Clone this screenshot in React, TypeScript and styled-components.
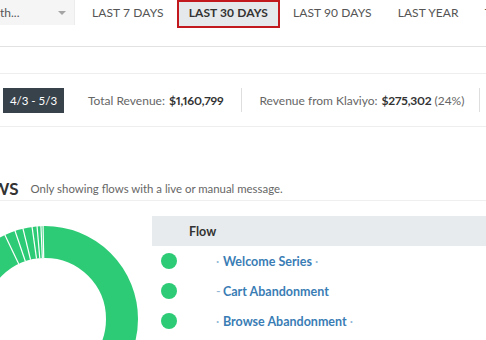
import styled, { createGlobalStyle } from 'styled-components';

const GlobalStyle = createGlobalStyle`
    body {
        margin: 0;
        background: #fff;
        font-family: Lato, "Open Sans", "Liberation Sans", sans-serif;
        color: #555;
    }
`;

const Page = styled.div`
    width: 486px;
    height: 340px;
    overflow: hidden;
`;

const TopBar = styled.div`
    display: flex;
    align-items: flex-start;
    height: 46px;
    border-bottom: 1px solid #e2e2e2;
    white-space: nowrap;
`;

const RangeSelect = styled.div`
    display: flex;
    align-items: center;
    justify-content: space-between;
    flex: none;
    width: 75px;
    height: 25px;
    box-sizing: border-box;
    padding: 0 8px 0 0;
    background: #f5f5f5;
    border-right: 1px solid #ececec;
    font-size: 12px;
    color: #555;
    margin-right: 4px;
`;

const Caret = styled.span`
    width: 0;
    height: 0;
    border-left: 4px solid transparent;
    border-right: 4px solid transparent;
    border-top: 4px solid #a5a5a5;
`;

const Tab = styled.div<{ $active?: boolean }>`
    flex: none;
    height: 28px;
    box-sizing: border-box;
    padding: 0 ${p => (p.$active ? '10px' : '11px')};
    display: flex;
    align-items: center;
    padding-bottom: 4px;
    font-size: 12px;
    letter-spacing: 0.1px;
    border: 2px solid ${p => (p.$active ? '#c2191f' : 'transparent')};
    background: ${p => (p.$active ? '#e6e9eb' : 'transparent')};
    color: ${p => (p.$active ? '#333' : '#555')};
    font-weight: ${p => (p.$active ? 700 : 400)};
`;

const StatsCard = styled.div`
    margin-top: 26px;
    height: 52px;
    border-top: 1px solid #eeeeee;
    border-bottom: 1px solid #eeeeee;
    display: flex;
    align-items: center;
    white-space: nowrap;
`;

const DateBadge = styled.div`
    flex: none;
    margin-left: 3px;
    margin-right: 24px;
    width: 61px;
    height: 25px;
    line-height: 25px;
    text-align: center;
    background: #38424b;
    color: #fff;
    font-size: 11.5px;
`;

const Stat = styled.div<{ $divider?: boolean }>`
    flex: none;
    display: flex;
    align-items: center;
    height: 24px;
    padding: 0 15px 0 ${p => (p.$divider ? '17px' : '0')};
    border-left: ${p => (p.$divider ? '1px solid #dedede' : 'none')};
    font-size: 12px;
    color: #666;
`;

const StatValue = styled.b`
    color: #333;
    margin-left: 4px;
    margin-right: 3px;
    font-variant-numeric: proportional-nums;
    letter-spacing: -0.2px;
`;

const SectionHead = styled.div`
    margin-top: 50px;
    height: 23px;
    display: flex;
    align-items: center;
    border-bottom: 1px solid #efefef;
    white-space: nowrap;
`;

const SectionTitle = styled.div`
    flex: none;
    font-size: 17px;
    font-weight: 700;
    color: #333;
    margin-left: -40px;
    margin-right: 12px;
`;

const SectionNote = styled.div`
    font-size: 11.4px;
    color: #666;
`;

const FlowArea = styled.div`
    display: flex;
`;

const DonutCol = styled.div`
    flex: none;
    width: 152px;
    height: 139px;
`;

const Table = styled.div`
    flex: 1;
    margin-top: 15px;
`;

const HeadRow = styled.div`
    height: 30px;
    display: flex;
    align-items: center;
    padding-left: 37px;
    background: #e8ebed;
    font-size: 12.5px;
    font-weight: 700;
    color: #333;
`;

const Row = styled.div`
    height: 30px;
    display: flex;
    align-items: center;
    padding-left: 9px;
`;

const Swatch = styled.span`
    flex: none;
    width: 16px;
    height: 16px;
    border-radius: 50%;
    background: #2ecb76;
    margin-right: 39px;
`;

const FlowLink = styled.a`
    font-size: 12.5px;
    font-weight: 700;
    color: #3a7db5;
    text-decoration: none;
    white-space: nowrap;
`;

const Mark = styled.span<{ $after?: boolean }>`
    display: inline-block;
    width: 7px;
    padding-left: ${p => (p.$after ? '3px' : '0')};
    color: #8fb6d6;
    font-weight: 400;
`;

const separators = [-1.2, -2.5, -4.9, -8, -13.7, -18.8, -25.5];

const Donut = () => {
    const cx = 45;
    const cy = 118;
    return (
        <svg width="152" height="139" viewBox="0 0 152 139">
            <circle cx={cx} cy={cy} r={77} fill="none" stroke="#2ecb76" strokeWidth={32} />
            {separators.map(a => {
                const t = (a * Math.PI) / 180;
                const s = Math.sin(t);
                const c = Math.cos(t);
                return (
                    <line
                        key={a}
                        x1={cx + 61 * s}
                        y1={cy - 61 * c}
                        x2={cx + 94 * s}
                        y2={cy - 94 * c}
                        stroke="#fff"
                        strokeWidth={1.2}
                    />
                );
            })}
        </svg>
    );
};

const flows = [
    { name: 'Welcome Series', pre: '·', post: '·' },
    { name: 'Cart Abandonment', pre: '-', post: '' },
    { name: 'Browse Abandonment', pre: '·', post: '·' },
];

const App = () => (
    <Page>
        <GlobalStyle />
        <TopBar>
            <RangeSelect>
                <span>th...</span>
                <Caret />
            </RangeSelect>
            <Tab>LAST 7 DAYS</Tab>
            <Tab $active>LAST 30 DAYS</Tab>
            <Tab>LAST 90 DAYS</Tab>
            <Tab>LAST YEAR</Tab>
            <Tab>TODAY</Tab>
        </TopBar>
        <StatsCard>
            <DateBadge>4/3 - 5/3</DateBadge>
            <Stat>
                Total Revenue: <StatValue>$1,160,799</StatValue>
            </Stat>
            <Stat $divider>
                Revenue from Klaviyo: <StatValue>$275,302</StatValue> (24%)
            </Stat>
            <Stat $divider />
        </StatsCard>
        <SectionHead>
            <SectionTitle>FLOWS</SectionTitle>
            <SectionNote>Only showing flows with a live or manual message.</SectionNote>
        </SectionHead>
        <FlowArea>
            <DonutCol>
                <Donut />
            </DonutCol>
            <Table>
                <HeadRow>Flow</HeadRow>
                {flows.map(f => (
                    <Row key={f.name}>
                        <Swatch />
                        <FlowLink href="#">
                            <Mark>{f.pre}</Mark>
                            {f.name}
                            {f.post && <Mark $after>{f.post}</Mark>}
                        </FlowLink>
                    </Row>
                ))}
            </Table>
        </FlowArea>
    </Page>
);

export default App;
